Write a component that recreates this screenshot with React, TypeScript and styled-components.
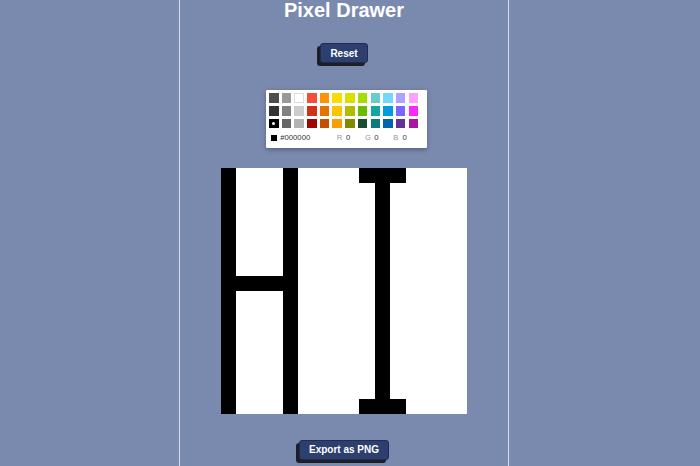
import React from 'react';
import styled, { createGlobalStyle } from 'styled-components';

const GlobalStyle = createGlobalStyle`
  html, body { margin: 0; padding: 0; background: #7a89ae; }
  body { font-family: "Liberation Sans", Arial, sans-serif; }
`;

const Page = styled.div`
  display: flex;
  min-height: 100vh;
`;

const Column = styled.main`
  margin-left: 179px;
  width: 328px;
  min-height: 466px;
  border-left: 1px solid #d9deea;
  border-right: 1px solid #d9deea;
  display: flex;
  flex-direction: column;
  align-items: center;
`;

const Title = styled.h1`
  margin: 0;
  font-size: 20px;
  line-height: 21px;
  font-weight: bold;
  color: #fff;
`;

const ActionButton = styled.button<{ $gap: number }>`
  margin-top: ${p => p.$gap}px;
  height: 20px;
  padding: 0 9px;
  font: bold 10px "Liberation Sans", Arial, sans-serif;
  color: #fff;
  background: #2d3f6e;
  border: 1px solid #1f2c4f;
  border-radius: 3px;
  box-shadow: -3px 3px 0 #1e1f26;
  cursor: pointer;
`;

const Picker = styled.div`
  margin: 27px 0 0 5px;
  width: 158px;
  padding: 3.2px 0 0 3px;
  background: #fff;
  border-radius: 1.3px;
  box-shadow: 0 1.3px 6.4px rgba(0, 0, 0, 0.12), 0 1.3px 3.2px rgba(0, 0, 0, 0.16);
`;

const Swatches = styled.div`
  display: flex;
  flex-wrap: wrap;
`;

const Swatch = styled.div<{ $color: string }>`
  position: relative;
  width: 9.6px;
  height: 9.6px;
  margin: 0 3.1px 3.2px 0;
  background: ${p => p.$color};
  box-shadow: ${p => (p.$color === '#FFFFFF' ? 'inset 0 0 0 1px #ddd' : 'none')};
`;

const SwatchDot = styled.span`
  position: absolute;
  inset: 3.2px;
  border-radius: 50%;
  background: #fff;
`;

const Fields = styled.div`
  position: relative;
  display: flex;
  width: 153.6px;
  height: 11.5px;
  margin-left: -1px;
  padding-bottom: 4.9px;
  font-size: 7.68px;
  line-height: 11.5px;
`;

const ActiveColor = styled.span<{ $color: string }>`
  position: absolute;
  top: 3.84px;
  left: 3.2px;
  width: 5.76px;
  height: 5.76px;
  background: ${p => p.$color};
`;

const HexField = styled.div`
  flex: 6;
  padding-left: 12.3px;
  color: #333;
`;

const RgbField = styled.div`
  flex: 3;
  display: flex;
`;

const RgbLabel = styled.span`
  width: 9.2px;
  color: #999;
  text-transform: uppercase;
`;

const RgbValue = styled.span`
  color: #333;
`;

const Canvas = styled.div`
  margin-top: 20px;
  width: 246px;
  height: 246px;
  display: grid;
  grid-template-columns: repeat(16, 1fr);
  grid-template-rows: repeat(16, 1fr);
  background: #fff;
`;

const Cell = styled.div<{ $on: boolean }>`
  background: ${p => (p.$on ? '#000' : '#fff')};
`;

const COLORS = [
  '#4D4D4D', '#999999', '#FFFFFF', '#F44E3B', '#FE9200', '#FCDC00', '#DBDF00', '#A4DD00', '#68CCCA', '#73D8FF', '#AEA1FF', '#FDA1FF',
  '#333333', '#808080', '#CCCCCC', '#D33115', '#E27300', '#FCC400', '#B0BC00', '#68BC00', '#16A5A5', '#009CE0', '#7B64FF', '#FA28FF',
  '#000000', '#666666', '#B3B3B3', '#9F0500', '#C45100', '#FB9E00', '#808900', '#194D33', '#0C797D', '#0062B1', '#653294', '#AB149E',
];

const isOn = (r: number, c: number) =>
  c === 0 ||
  c === 4 ||
  (r === 7 && c >= 1 && c <= 3) ||
  c === 10 ||
  ((r === 0 || r === 15) && c >= 9 && c <= 11);

export default function App() {
  const active = '#000000';
  const cells = [];
  for (let r = 0; r < 16; r++) {
    for (let c = 0; c < 16; c++) {
      cells.push(<Cell key={`${r}-${c}`} $on={isOn(r, c)} />);
    }
  }
  return (
    <>
      <GlobalStyle />
      <Page>
        <Column>
          <Title>Pixel Drawer</Title>
          <ActionButton $gap={22}>Reset</ActionButton>
          <Picker>
            <Swatches>
              {COLORS.map(col => (
                <Swatch key={col} $color={col}>
                  {col === active && <SwatchDot />}
                </Swatch>
              ))}
            </Swatches>
            <Fields>
              <ActiveColor $color={active} />
              <HexField>#000000</HexField>
              <RgbField><RgbLabel>r</RgbLabel><RgbValue>0</RgbValue></RgbField>
              <RgbField><RgbLabel>g</RgbLabel><RgbValue>0</RgbValue></RgbField>
              <RgbField><RgbLabel>b</RgbLabel><RgbValue>0</RgbValue></RgbField>
            </Fields>
          </Picker>
          <Canvas>{cells}</Canvas>
          <ActionButton $gap={26}>Export as PNG</ActionButton>
        </Column>
      </Page>
    </>
  );
}
